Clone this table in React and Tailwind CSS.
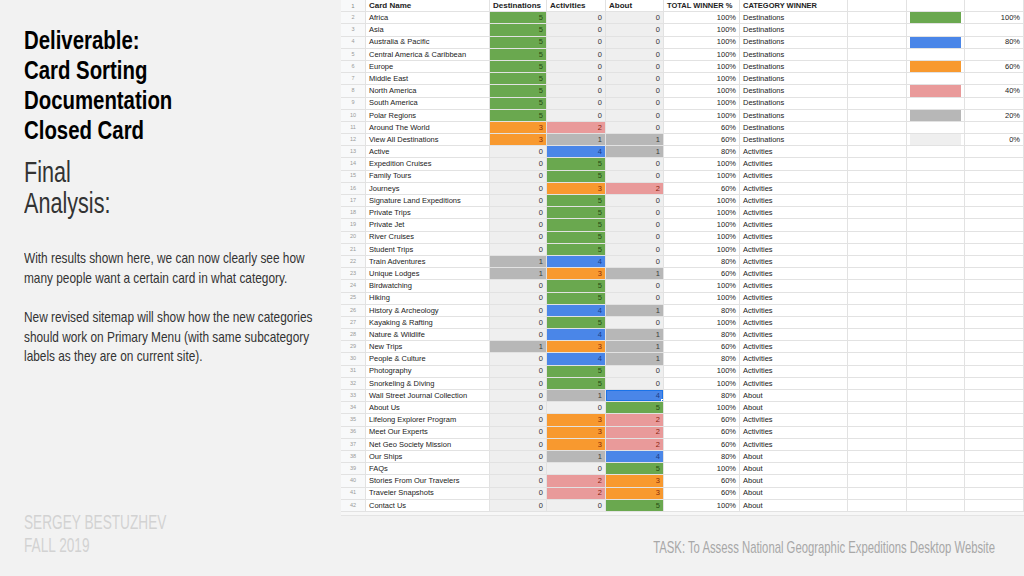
import React from 'react';

// card sorting results - [name, destinations, activities, about, winner %, category]
const rows = [
  ['Africa', 5, 0, 0, '100%', 'Destinations'],
  ['Asia', 5, 0, 0, '100%', 'Destinations'],
  ['Australia & Pacific', 5, 0, 0, '100%', 'Destinations'],
  ['Central America & Caribbean', 5, 0, 0, '100%', 'Destinations'],
  ['Europe', 5, 0, 0, '100%', 'Destinations'],
  ['Middle East', 5, 0, 0, '100%', 'Destinations'],
  ['North America', 5, 0, 0, '100%', 'Destinations'],
  ['South America', 5, 0, 0, '100%', 'Destinations'],
  ['Polar Regions', 5, 0, 0, '100%', 'Destinations'],
  ['Around The World', 3, 2, 0, '60%', 'Destinations'],
  ['View All Destinations', 3, 1, 1, '60%', 'Destinations'],
  ['Active', 0, 4, 1, '80%', 'Activities'],
  ['Expedition Cruises', 0, 5, 0, '100%', 'Activities'],
  ['Family Tours', 0, 5, 0, '100%', 'Activities'],
  ['Journeys', 0, 3, 2, '60%', 'Activities'],
  ['Signature Land Expeditions', 0, 5, 0, '100%', 'Activities'],
  ['Private Trips', 0, 5, 0, '100%', 'Activities'],
  ['Private Jet', 0, 5, 0, '100%', 'Activities'],
  ['River Cruises', 0, 5, 0, '100%', 'Activities'],
  ['Student Trips', 0, 5, 0, '100%', 'Activities'],
  ['Train Adventures', 1, 4, 0, '80%', 'Activities'],
  ['Unique Lodges', 1, 3, 1, '60%', 'Activities'],
  ['Birdwatching', 0, 5, 0, '100%', 'Activities'],
  ['Hiking', 0, 5, 0, '100%', 'Activities'],
  ['History & Archeology', 0, 4, 1, '80%', 'Activities'],
  ['Kayaking & Rafting', 0, 5, 0, '100%', 'Activities'],
  ['Nature & Wildlife', 0, 4, 1, '80%', 'Activities'],
  ['New Trips', 1, 3, 1, '60%', 'Activities'],
  ['People & Culture', 0, 4, 1, '80%', 'Activities'],
  ['Photography', 0, 5, 0, '100%', 'Activities'],
  ['Snorkeling & Diving', 0, 5, 0, '100%', 'Activities'],
  ['Wall Street Journal Collection', 0, 1, 4, '80%', 'About'],
  ['About Us', 0, 0, 5, '100%', 'About'],
  ['Lifelong Explorer Program', 0, 3, 2, '60%', 'Activities'],
  ['Meet Our Experts', 0, 3, 2, '60%', 'Activities'],
  ['Net Geo Society Mission', 0, 3, 2, '60%', 'Activities'],
  ['Our Ships', 0, 1, 4, '80%', 'About'],
  ['FAQs', 0, 0, 5, '100%', 'About'],
  ['Stories From Our Travelers', 0, 2, 3, '60%', 'About'],
  ['Traveler Snapshots', 0, 2, 3, '60%', 'About'],
  ['Contact Us', 0, 0, 5, '100%', 'About'],
];

// conditional formatting colours by vote count
const voteColor = {
  0: 'bg-[#efefef] text-[#333]',
  1: 'bg-[#b7b7b7] text-[#3a3a3a]',
  2: 'bg-[#e99a9a] text-[#8a1f10]',
  3: 'bg-[#f8992f] text-[#8a2b0a]',
  4: 'bg-[#4a86e8] text-[#1c3d87]',
  5: 'bg-[#6aa84f] text-[#274e13]',
};

// legend shown on the right side, keyed by data row index
const legend = {
  0: ['bg-[#6aa84f]', '100%'],
  2: ['bg-[#4a86e8]', '80%'],
  4: ['bg-[#f8992f]', '60%'],
  6: ['bg-[#e99a9a]', '40%'],
  8: ['bg-[#b7b7b7]', '20%'],
  10: ['bg-[#efefef]', '0%'],
};

const cell = 'border-r border-b border-[#e2e2e2] px-[3px] flex items-center overflow-hidden whitespace-nowrap';

const Sheet = () => (
  <div className="grid grid-cols-[25px_124px_57px_59px_58px_76px_108px_59px_58px_59px] auto-rows-[12.19px] bg-white font-['Liberation_Sans',Arial,sans-serif] text-[7.5px] text-[#222] leading-none">
    {/* header row */}
    <div className={`${cell} justify-center bg-[#f8f9fa] text-[6px] text-[#888]`}>1</div>
    <div className={`${cell} font-bold text-[8px]`}>Card Name</div>
    <div className={`${cell} font-bold text-[8px]`}>Destinations</div>
    <div className={`${cell} font-bold text-[8px]`}>Activities</div>
    <div className={`${cell} font-bold text-[8px]`}>About</div>
    <div className={`${cell} font-bold text-[7.5px]`}>TOTAL WINNER %</div>
    <div className={`${cell} font-bold text-[7.5px]`}>CATEGORY WINNER</div>
    <div className={cell}></div>
    <div className={cell}></div>
    <div className={cell}></div>

    {rows.map((r, i) => {
      const lg = legend[i];
      return (
        <React.Fragment key={i}>
          <div className={`${cell} justify-center bg-[#f8f9fa] text-[5.5px] text-[#999]`}>{i + 2}</div>
          <div className={cell}>{r[0]}</div>
          <div className={`${cell} justify-end ${voteColor[r[1]]}`}>{r[1]}</div>
          <div className={`${cell} justify-end ${voteColor[r[2]]}`}>{r[2]}</div>
          <div className={`${cell} justify-end relative ${voteColor[r[3]]}`}>
            {r[3]}
            {/* active selection on the WSJ row */}
            {i === 31 && (
              <>
                <span className="absolute inset-0 border border-[#1a73e8]" />
                <span className="absolute -bottom-[2px] -right-[2px] w-[4px] h-[4px] bg-[#1a73e8] border border-white" />
              </>
            )}
          </div>
          <div className={`${cell} justify-end`}>{r[4]}</div>
          <div className={cell}>{r[5]}</div>
          <div className={cell}></div>
          <div className={`${cell} px-0`}>
            {lg && <div className={`w-full h-full ${lg[0]}`} />}
          </div>
          <div className={`${cell} justify-end`}>{lg ? lg[1] : ''}</div>
        </React.Fragment>
      );
    })}
  </div>
);

// no condensed face installed, so squeeze Liberation Sans horizontally to get the Oswald look
const App = () => {
  return (
    <div className="w-[1024px] h-[576px] overflow-hidden bg-[#f2f2f2] flex font-['Liberation_Sans',Arial,sans-serif]">
      {/* left column: slide copy */}
      <div className="w-[341px] shrink-0 flex flex-col pl-[24px] pt-[25px] pb-[20px]">
        <h1 className="w-max origin-left scale-x-[0.815] text-[25px] leading-[30px] font-bold text-black">
          Deliverable:<br />Card Sorting<br />Documentation<br />Closed Card
        </h1>
        <h2 className="mt-[11px] w-max origin-left scale-x-[0.72] text-[30px] leading-[31px] text-[#333]">
          Final<br />Analysis:
        </h2>
        <p className="mt-[30px] w-max origin-left scale-x-[0.79] text-[15px] leading-[20px] text-[#333]">
          With results shown here, we can now clearly see how<br />
          many people want a certain card in what category.
        </p>
        <p className="mt-[19px] w-max origin-left scale-x-[0.79] text-[15px] leading-[19.5px] text-[#333]">
          New revised sitemap will show how the new categories<br />
          should work on Primary Menu (with same subcategory<br />
          labels as they are on current site).
        </p>
        <div className="mt-auto w-max origin-left scale-x-[0.65] text-[21px] leading-[23px] text-[#d2d2d2]">
          SERGEY BESTUZHEV<br />FALL 2019
        </div>
      </div>

      {/* right column: spreadsheet + task line */}
      <div className="flex-1 flex flex-col">
        <Sheet />
        <div className="h-[4px] bg-[#f7f7f7] border-b border-[#e4e4e4]" />
        <div className="mt-auto pb-[18px] pr-[29px] flex justify-end">
          <div className="w-max origin-right scale-x-[0.665] text-[17px] leading-[20px] text-[#a8a8a8]">
            TASK: To Assess National Geographic Expeditions Desktop Website
          </div>
        </div>
      </div>
    </div>
  );
};

export default App;
